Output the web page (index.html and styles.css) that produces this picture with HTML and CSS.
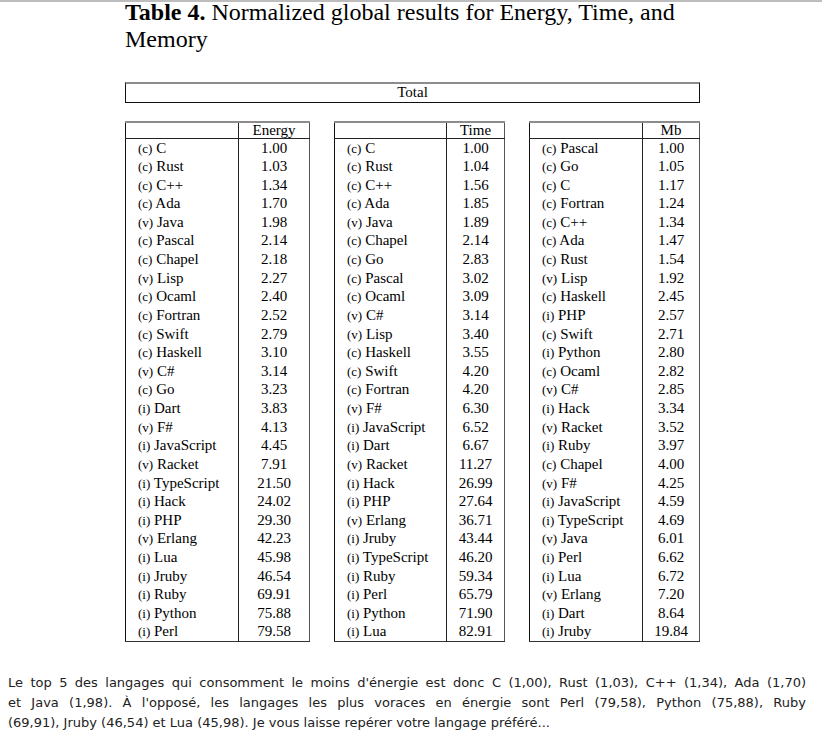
FILE: index.html
```html
<!DOCTYPE html>
<html lang="fr">
<head>
<meta charset="utf-8">
<title>Table 4</title>
<link rel="stylesheet" href="styles.css">
</head>
<body>
<div class="page">
  <div class="figure">
    <div class="caption"><span class="cap-b">Table 4.</span> Normalized global results for Energy, Time, and Memory</div>
    <div class="total">Total</div>
    <div class="tables">
      <table class="res t1">
        <thead><tr><th class="name"></th><th class="val">Energy</th></tr></thead>
        <tbody>
          <tr><td class="name"><span class="p">(c)</span> C</td><td class="val">1.00</td></tr>
          <tr><td class="name"><span class="p">(c)</span> Rust</td><td class="val">1.03</td></tr>
          <tr><td class="name"><span class="p">(c)</span> C++</td><td class="val">1.34</td></tr>
          <tr><td class="name"><span class="p">(c)</span> Ada</td><td class="val">1.70</td></tr>
          <tr><td class="name"><span class="p">(v)</span> Java</td><td class="val">1.98</td></tr>
          <tr><td class="name"><span class="p">(c)</span> Pascal</td><td class="val">2.14</td></tr>
          <tr><td class="name"><span class="p">(c)</span> Chapel</td><td class="val">2.18</td></tr>
          <tr><td class="name"><span class="p">(v)</span> Lisp</td><td class="val">2.27</td></tr>
          <tr><td class="name"><span class="p">(c)</span> Ocaml</td><td class="val">2.40</td></tr>
          <tr><td class="name"><span class="p">(c)</span> Fortran</td><td class="val">2.52</td></tr>
          <tr><td class="name"><span class="p">(c)</span> Swift</td><td class="val">2.79</td></tr>
          <tr><td class="name"><span class="p">(c)</span> Haskell</td><td class="val">3.10</td></tr>
          <tr><td class="name"><span class="p">(v)</span> C#</td><td class="val">3.14</td></tr>
          <tr><td class="name"><span class="p">(c)</span> Go</td><td class="val">3.23</td></tr>
          <tr><td class="name"><span class="p">(i)</span> Dart</td><td class="val">3.83</td></tr>
          <tr><td class="name"><span class="p">(v)</span> F#</td><td class="val">4.13</td></tr>
          <tr><td class="name"><span class="p">(i)</span> JavaScript</td><td class="val">4.45</td></tr>
          <tr><td class="name"><span class="p">(v)</span> Racket</td><td class="val">7.91</td></tr>
          <tr><td class="name"><span class="p">(i)</span> TypeScript</td><td class="val">21.50</td></tr>
          <tr><td class="name"><span class="p">(i)</span> Hack</td><td class="val">24.02</td></tr>
          <tr><td class="name"><span class="p">(i)</span> PHP</td><td class="val">29.30</td></tr>
          <tr><td class="name"><span class="p">(v)</span> Erlang</td><td class="val">42.23</td></tr>
          <tr><td class="name"><span class="p">(i)</span> Lua</td><td class="val">45.98</td></tr>
          <tr><td class="name"><span class="p">(i)</span> Jruby</td><td class="val">46.54</td></tr>
          <tr><td class="name"><span class="p">(i)</span> Ruby</td><td class="val">69.91</td></tr>
          <tr><td class="name"><span class="p">(i)</span> Python</td><td class="val">75.88</td></tr>
          <tr><td class="name"><span class="p">(i)</span> Perl</td><td class="val">79.58</td></tr>
        </tbody>
      </table>
      <table class="res t2">
        <thead><tr><th class="name"></th><th class="val">Time</th></tr></thead>
        <tbody>
          <tr><td class="name"><span class="p">(c)</span> C</td><td class="val">1.00</td></tr>
          <tr><td class="name"><span class="p">(c)</span> Rust</td><td class="val">1.04</td></tr>
          <tr><td class="name"><span class="p">(c)</span> C++</td><td class="val">1.56</td></tr>
          <tr><td class="name"><span class="p">(c)</span> Ada</td><td class="val">1.85</td></tr>
          <tr><td class="name"><span class="p">(v)</span> Java</td><td class="val">1.89</td></tr>
          <tr><td class="name"><span class="p">(c)</span> Chapel</td><td class="val">2.14</td></tr>
          <tr><td class="name"><span class="p">(c)</span> Go</td><td class="val">2.83</td></tr>
          <tr><td class="name"><span class="p">(c)</span> Pascal</td><td class="val">3.02</td></tr>
          <tr><td class="name"><span class="p">(c)</span> Ocaml</td><td class="val">3.09</td></tr>
          <tr><td class="name"><span class="p">(v)</span> C#</td><td class="val">3.14</td></tr>
          <tr><td class="name"><span class="p">(v)</span> Lisp</td><td class="val">3.40</td></tr>
          <tr><td class="name"><span class="p">(c)</span> Haskell</td><td class="val">3.55</td></tr>
          <tr><td class="name"><span class="p">(c)</span> Swift</td><td class="val">4.20</td></tr>
          <tr><td class="name"><span class="p">(c)</span> Fortran</td><td class="val">4.20</td></tr>
          <tr><td class="name"><span class="p">(v)</span> F#</td><td class="val">6.30</td></tr>
          <tr><td class="name"><span class="p">(i)</span> JavaScript</td><td class="val">6.52</td></tr>
          <tr><td class="name"><span class="p">(i)</span> Dart</td><td class="val">6.67</td></tr>
          <tr><td class="name"><span class="p">(v)</span> Racket</td><td class="val">11.27</td></tr>
          <tr><td class="name"><span class="p">(i)</span> Hack</td><td class="val">26.99</td></tr>
          <tr><td class="name"><span class="p">(i)</span> PHP</td><td class="val">27.64</td></tr>
          <tr><td class="name"><span class="p">(v)</span> Erlang</td><td class="val">36.71</td></tr>
          <tr><td class="name"><span class="p">(i)</span> Jruby</td><td class="val">43.44</td></tr>
          <tr><td class="name"><span class="p">(i)</span> TypeScript</td><td class="val">46.20</td></tr>
          <tr><td class="name"><span class="p">(i)</span> Ruby</td><td class="val">59.34</td></tr>
          <tr><td class="name"><span class="p">(i)</span> Perl</td><td class="val">65.79</td></tr>
          <tr><td class="name"><span class="p">(i)</span> Python</td><td class="val">71.90</td></tr>
          <tr><td class="name"><span class="p">(i)</span> Lua</td><td class="val">82.91</td></tr>
        </tbody>
      </table>
      <table class="res t3">
        <thead><tr><th class="name"></th><th class="val">Mb</th></tr></thead>
        <tbody>
          <tr><td class="name"><span class="p">(c)</span> Pascal</td><td class="val">1.00</td></tr>
          <tr><td class="name"><span class="p">(c)</span> Go</td><td class="val">1.05</td></tr>
          <tr><td class="name"><span class="p">(c)</span> C</td><td class="val">1.17</td></tr>
          <tr><td class="name"><span class="p">(c)</span> Fortran</td><td class="val">1.24</td></tr>
          <tr><td class="name"><span class="p">(c)</span> C++</td><td class="val">1.34</td></tr>
          <tr><td class="name"><span class="p">(c)</span> Ada</td><td class="val">1.47</td></tr>
          <tr><td class="name"><span class="p">(c)</span> Rust</td><td class="val">1.54</td></tr>
          <tr><td class="name"><span class="p">(v)</span> Lisp</td><td class="val">1.92</td></tr>
          <tr><td class="name"><span class="p">(c)</span> Haskell</td><td class="val">2.45</td></tr>
          <tr><td class="name"><span class="p">(i)</span> PHP</td><td class="val">2.57</td></tr>
          <tr><td class="name"><span class="p">(c)</span> Swift</td><td class="val">2.71</td></tr>
          <tr><td class="name"><span class="p">(i)</span> Python</td><td class="val">2.80</td></tr>
          <tr><td class="name"><span class="p">(c)</span> Ocaml</td><td class="val">2.82</td></tr>
          <tr><td class="name"><span class="p">(v)</span> C#</td><td class="val">2.85</td></tr>
          <tr><td class="name"><span class="p">(i)</span> Hack</td><td class="val">3.34</td></tr>
          <tr><td class="name"><span class="p">(v)</span> Racket</td><td class="val">3.52</td></tr>
          <tr><td class="name"><span class="p">(i)</span> Ruby</td><td class="val">3.97</td></tr>
          <tr><td class="name"><span class="p">(c)</span> Chapel</td><td class="val">4.00</td></tr>
          <tr><td class="name"><span class="p">(v)</span> F#</td><td class="val">4.25</td></tr>
          <tr><td class="name"><span class="p">(i)</span> JavaScript</td><td class="val">4.59</td></tr>
          <tr><td class="name"><span class="p">(i)</span> TypeScript</td><td class="val">4.69</td></tr>
          <tr><td class="name"><span class="p">(v)</span> Java</td><td class="val">6.01</td></tr>
          <tr><td class="name"><span class="p">(i)</span> Perl</td><td class="val">6.62</td></tr>
          <tr><td class="name"><span class="p">(i)</span> Lua</td><td class="val">6.72</td></tr>
          <tr><td class="name"><span class="p">(v)</span> Erlang</td><td class="val">7.20</td></tr>
          <tr><td class="name"><span class="p">(i)</span> Dart</td><td class="val">8.64</td></tr>
          <tr><td class="name"><span class="p">(i)</span> Jruby</td><td class="val">19.84</td></tr>
        </tbody>
      </table>
    </div>
  </div>
  <p class="text"><span class="line">Le top 5 des langages qui consomment le moins d'énergie est donc C (1,00), Rust (1,03), C++ (1,34), Ada (1,70)</span> <span class="line">et Java (1,98). À l'opposé, les langages les plus voraces en énergie sont Perl (79,58), Python (75,88), Ruby</span> <span class="line last">(69,91), Jruby (46,54) et Lua (45,98). Je vous laisse repérer votre langage préféré...</span></p>
</div>
</body>
</html>
```

FILE: styles.css
```css
* { box-sizing: border-box; }

html, body {
  margin: 0;
  padding: 0;
  background: #fff;
}

.page {
  border-top: 2px solid #bdbdbd;
  padding: 0 16px 0 8px;
}

.figure {
  margin-left: 117px;
  width: 575px;
  font-family: "Liberation Serif", "Times New Roman", serif;
  color: #000;
}

.caption {
  margin-top: -3px;
  font-family: "Liberation Serif", "Times New Roman", serif;
  font-size: 24px;
  line-height: 27px;
  font-weight: normal;
  color: #000;
}

.cap-b { font-weight: bold; }

.total {
  margin-top: 29px;
  height: 21px;
  border: 1px solid #111;
  border-top: 2px solid #8c8c8c;
  text-align: center;
  font-size: 15px;
  line-height: 16px;
}

.tables {
  display: flex;
  gap: 24px;
  margin-top: 18px;
  align-items: flex-start;
}

.res {
  border-collapse: collapse;
  table-layout: fixed;
  font-size: 15px;
  border-left: 1px solid #111;
  border-right: 1px solid #555;
  border-bottom: 1px solid #333;
  border-top: 2px solid #8c8c8c;
}

.t1 { width: 185px; }
.t2 { width: 171px; }
.t3 { width: 171px; }

.t1 .name { width: 113px; }
.t2 .name { width: 112px; }
.t3 .name { width: 113px; }

.res th {
  height: 16px;
  padding: 0;
  font-weight: normal;
  line-height: 15px;
  border-bottom: 1px solid #222;
}

.res td {
  padding: 0;
  height: 18.64px;
  line-height: 17px;
}

.res .name {
  text-align: left;
  padding-left: 12px;
  border-right: 1px solid #222;
  white-space: nowrap;
}

.res .val {
  text-align: center;
}

.res .p {
  font-size: 13px;
  line-height: 1;
}

.text {
  margin: 31px 0 0 0;
  font-family: "DejaVu Sans", Verdana, sans-serif;
  font-size: 13px;
  line-height: 20px;
  color: #222;
}

.line {
  display: block;
  text-align: justify;
  text-align-last: justify;
}

.line.last {
  text-align-last: left;
}
```
